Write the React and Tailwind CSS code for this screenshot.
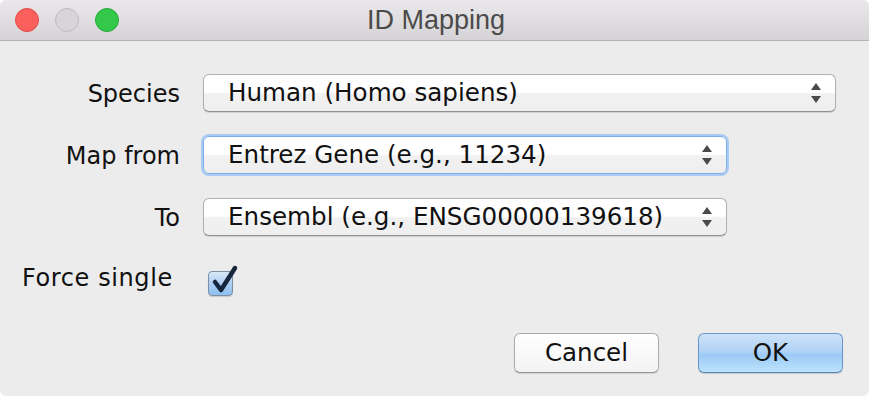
import React from "react";

function Arrows() {
  return (
    <svg width="12" height="22" viewBox="0 0 12 22" className="shrink-0">
      <path d="M6 1 L11 8 L1 8 Z" fill="#4a4a4a" />
      <path d="M1 14 L11 14 L6 21 Z" fill="#4a4a4a" />
    </svg>
  );
}

function Combo({ text, width, focused }) {
  return (
    <div
      className={
        "h-[38px] rounded-[6px] border flex items-center justify-between pl-[24px] pr-[13px] bg-[linear-gradient(to_bottom,#ffffff_0%,#ffffff_48%,#f1f1f1_52%,#efefef_100%)] " +
        (focused
          ? "border-[#7eaee6] shadow-[0_0_0_2px_#a8cbf3]"
          : "border-[#b0b0b0] border-b-[#8f8f8f] shadow-[0_1px_1px_rgba(0,0,0,0.12)]")
      }
      style={{ width }}
    >
      <span className="text-[#111] leading-none text-[24.6px] pt-[1px]">{text}</span>
      <Arrows />
    </div>
  );
}

export default function App() {
  return (
    <div className="w-[869px] h-[396px] bg-white">
      <div
        className="w-[869px] h-[396px] rounded-[6px] overflow-hidden bg-[#ececec] flex flex-col text-[24px] text-[#111]"
        style={{ fontFamily: '"DejaVu Sans", "Noto Sans", sans-serif' }}
      >
        {/* Title bar */}
        <div className="relative h-[41px] shrink-0 border-b border-[#b4b3b4] bg-[linear-gradient(to_bottom,#eae8ea,#d5d3d5)] flex items-center justify-center">
          <div className="absolute left-[15px] top-[8px] flex gap-[16px]">
            <div className="w-[24px] h-[24px] rounded-full bg-[#fc605c] border border-[#dd4c47]" />
            <div className="w-[24px] h-[24px] rounded-full bg-[#d7d5d7] border border-[#bdbbbd]" />
            <div className="w-[24px] h-[24px] rounded-full bg-[#34c84a] border border-[#26a93a]" />
          </div>
          <span
            className="text-[27px] text-[#4b4b4b] leading-none ml-[3px]"
            style={{ fontFamily: '"Liberation Sans", Arial, sans-serif' }}
          >
            ID Mapping
          </span>
        </div>

        {/* Form */}
        <div className="flex flex-col pt-[33px] gap-[24px]">
          <div className="flex items-center gap-[23px]">
            <div className="w-[180px] text-right pt-[2px]">Species</div>
            <Combo text="Human (Homo sapiens)" width={633} />
          </div>
          <div className="flex items-center gap-[23px]">
            <div className="w-[180px] text-right pt-[2px]">Map from</div>
            <Combo text="Entrez Gene (e.g., 11234)" width={524} focused />
          </div>
          <div className="flex items-center gap-[23px]">
            <div className="w-[180px] text-right pt-[2px]">To</div>
            <Combo text="Ensembl (e.g., ENSG00000139618)" width={524} />
          </div>
          <div className="flex items-center h-[38px] mt-[-1px]">
            <div className="w-[186px] pl-[22px] tracking-[0.6px]">Force single</div>
            <div className="relative w-[25px] h-[25px] ml-[22px] mt-[10px] rounded-[4px] border border-[#7f8fa3] bg-[linear-gradient(to_bottom,#d8e8f8,#a9cdf2_55%,#8ebfee)] shadow-[0_1px_1px_rgba(0,0,0,0.15)]">
              <svg
                width="30"
                height="34"
                viewBox="0 0 30 34"
                className="absolute left-[1px] top-[-8px]"
              >
                <path
                  d="M5 18 L11 26 L25 4"
                  fill="none"
                  stroke="#16263d"
                  strokeWidth="4.5"
                  strokeLinecap="round"
                  strokeLinejoin="round"
                />
              </svg>
            </div>
          </div>
        </div>

        {/* Buttons */}
        <div className="flex justify-end gap-[39px] pr-[26px] mt-[36px]">
          <div className="w-[145px] h-[40px] rounded-[6px] border border-[#acacac] border-b-[#949494] bg-[linear-gradient(to_bottom,#ffffff,#f3f3f3)] shadow-[0_1px_1px_rgba(0,0,0,0.12)] flex items-center justify-center text-[24.5px]">
            Cancel
          </div>
          <div className="w-[145px] h-[40px] rounded-[6px] border border-[#6b95cb] border-b-[#5a84bd] bg-[linear-gradient(to_bottom,#cde2f8_0%,#b1d3f6_45%,#9ccaf5_55%,#bde3fc_100%)] shadow-[0_1px_1px_rgba(0,0,0,0.15)] flex items-center justify-center text-[24.5px]">
            OK
          </div>
        </div>
      </div>
    </div>
  );
}
